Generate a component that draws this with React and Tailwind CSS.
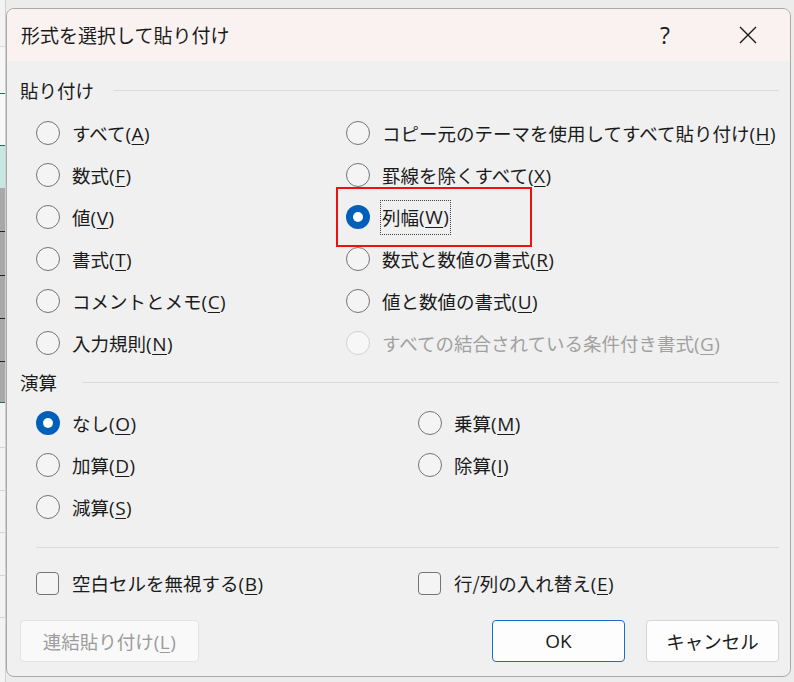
import { useState } from "react";

// Radio button in Windows 11 style
const Radio = ({ checked, disabled }) => {
    if (checked) {
        return (
            <span className="w-[24px] h-[24px] shrink-0 rounded-full bg-[#005fb8] flex items-center justify-center">
                <span className="w-[10px] h-[10px] rounded-full bg-white" />
            </span>
        );
    }
    return (
        <span
            className={`w-[24px] h-[24px] shrink-0 rounded-full border ${
                disabled ? "border-[#d2d2d2] bg-[#f7f7f7]" : "border-[#747474] bg-[#f4f4f4]"
            }`}
        />
    );
};

// label text with the access key in parentheses
const Label = ({ text, k }) => (
    <>
        {text}
        <span className="font-['Open_Sans',sans-serif] text-[19px] tracking-[0.5px]">
            (<span className="underline decoration-1 underline-offset-[3px]">{k}</span>)
        </span>
    </>
);

const Option = ({ text, k, checked, disabled, focused, marked }) => (
    <div className="relative flex items-center h-[42px]">
        <Radio checked={checked} disabled={disabled} />
        {focused ? (
            <span className="ml-[10px] inline-flex items-center h-[35px] px-[1px] border border-dotted border-[#444] whitespace-nowrap">
                <Label text={text} k={k} />
            </span>
        ) : (
            <span className={`ml-[12px] whitespace-nowrap ${disabled ? "text-[#a0a0a0]" : ""}`}>
                <Label text={text} k={k} />
            </span>
        )}
        {marked && <div className="absolute left-[-10px] top-[-9px] w-[196px] h-[60px] border-2 border-[#f01010]" />}
    </div>
);

const Check = ({ text, k }) => (
    <div className="flex items-center h-[42px]">
        <span className="w-[23px] h-[23px] shrink-0 rounded-[4px] border border-[#747474] bg-[#f4f4f4]" />
        <span className="ml-[13px] whitespace-nowrap">
            <Label text={text} k={k} />
        </span>
    </div>
);

const SectionHeader = ({ title, gap }) => (
    <div className="flex items-center h-[24px]">
        <span className="whitespace-nowrap">{title}</span>
        <div className={`flex-1 h-px bg-[#dadada] ${gap}`} />
    </div>
);

// Excel sheet edge visible behind the dialog
const LeftStrip = () => (
    <div className="w-[6px] shrink-0 flex flex-col border-r border-[#cfcfcf]">
        <div className="h-[47px] bg-[#f3f3f3] border-b border-[#dcdcdc]" />
        <div className="h-[46px] bg-[#f6f6f6]" />
        <div className="h-px bg-[#217346]" />
        <div className="h-[51px] bg-[#f8f8f8]" />
        <div className="h-px bg-[#217346]" />
        <div className="h-[42px] bg-[#c5e6e3]" />
        <div className="h-[44px] bg-[#a9a9a9] border-b border-[#222]" />
        <div className="h-[44px] bg-[#a9a9a9] border-b border-[#222]" />
        <div className="h-[43px] bg-[#a9a9a9] border-b border-[#222]" />
        <div className="h-[43px] bg-[#a9a9a9] border-b border-[#222]" />
        <div className="h-[40px] bg-[#a9a9a9]" />
        <div className="h-px bg-[#217346]" />
        <div className="h-[45px] bg-[#f3f3f3] border-b border-[#d4d4d4]" />
        <div className="h-[43px] bg-[#f3f3f3] border-b border-[#d4d4d4]" />
        <div className="h-[42px] bg-[#f3f3f3] border-b border-[#d4d4d4]" />
        <div className="h-[43px] bg-[#f3f3f3] border-b border-[#d4d4d4]" />
        <div className="h-[42px] bg-[#f3f3f3] border-b border-[#d4d4d4]" />
        <div className="flex-1 bg-[#f3f3f3]" />
    </div>
);

const App = () => {
    const [paste, setPaste] = useState("width");

    return (
        <div className="flex w-[794px] h-[682px] overflow-hidden bg-[#ececec] text-[#1b1b1b] font-['Noto_Sans_CJK_JP',sans-serif] text-[18.5px] leading-[24px]">
            <LeftStrip />
            <div className="flex flex-col pt-[8px] w-[785px] shrink-0">
                <div className="flex flex-col rounded-[8px] border border-[#a9a9a9] bg-[#f0f0f0] overflow-hidden">
                    {/* Title bar */}
                    <div className="flex items-center h-[52px] bg-[#f9f2f1] pl-[14px]">
                        <span className="flex-1 text-[19px] whitespace-nowrap">形式を選択して貼り付け</span>
                        <span className="w-[46px] text-center text-[23px] font-['Open_Sans',sans-serif]">?</span>
                        <button className="ml-[37px] mr-[19px] w-[46px] h-[40px] flex items-center justify-center">
                            <svg width="18" height="18" viewBox="0 0 18 18" fill="none" stroke="#1b1b1b" strokeWidth="1.4">
                                <path d="M1 1L17 17M17 1L1 17" />
                            </svg>
                        </button>
                    </div>

                    {/* Body */}
                    <div className="flex flex-col pl-[13px] pr-[11px] pb-[14px]">
                        <div className="mt-[17px]">
                            <SectionHeader title="貼り付け" gap="ml-[19px]" />
                        </div>
                        <div className="mt-[10px] pl-[16px] grid grid-cols-[310px_1fr]">
                            <div className="flex flex-col">
                                <Option text="すべて" k="A" />
                                <Option text="数式" k="F" />
                                <Option text="値" k="V" />
                                <Option text="書式" k="T" />
                                <Option text="コメントとメモ" k="C" />
                                <Option text="入力規則" k="N" />
                            </div>
                            <div className="flex flex-col">
                                <Option text="コピー元のテーマを使用してすべて貼り付け" k="H" />
                                <Option text="罫線を除くすべて" k="X" />
                                <Option text="列幅" k="W" checked={paste === "width"} focused marked />
                                <Option text="数式と数値の書式" k="R" />
                                <Option text="値と数値の書式" k="U" />
                                <Option text="すべての結合されている条件付き書式" k="G" disabled />
                            </div>
                        </div>

                        <div className="mt-[6px]">
                            <SectionHeader title="演算" gap="ml-[25px]" />
                        </div>
                        <div className="mt-[8px] pl-[16px] grid grid-cols-[382px_1fr]">
                            <div className="flex flex-col">
                                <Option text="なし" k="O" checked />
                                <Option text="加算" k="D" />
                                <Option text="減算" k="S" />
                            </div>
                            <div className="flex flex-col">
                                <Option text="乗算" k="M" />
                                <Option text="除算" k="I" />
                            </div>
                        </div>

                        <div className="mt-[19px] ml-[16px] h-px bg-[#dadada]" />

                        <div className="mt-[14px] pl-[16px] grid grid-cols-[382px_1fr]">
                            <Check text="空白セルを無視する" k="B" />
                            <Check text="行/列の入れ替え" k="E" />
                        </div>

                        <div className="mt-[16px] flex items-center">
                            <button className="w-[179px] h-[42px] rounded-[4px] border border-[#e3e3e3] bg-[#f9f9f9] text-[#9c9c9c]">
                                <Label text="連結貼り付け" k="L" />
                            </button>
                            <button
                                className="ml-auto w-[133px] h-[42px] rounded-[4px] border border-[#1a6fc4] bg-[#fdfdfd] font-['Open_Sans',sans-serif] text-[19px]"
                                onClick={() => setPaste("width")}
                            >
                                OK
                            </button>
                            <button className="ml-[21px] w-[133px] h-[42px] rounded-[4px] border border-[#d5d5d5] bg-[#fdfdfd]">
                                キャンセル
                            </button>
                        </div>
                    </div>
                </div>
            </div>
            <div className="flex-1 bg-[#ececec]" />
        </div>
    );
};

export default App;
